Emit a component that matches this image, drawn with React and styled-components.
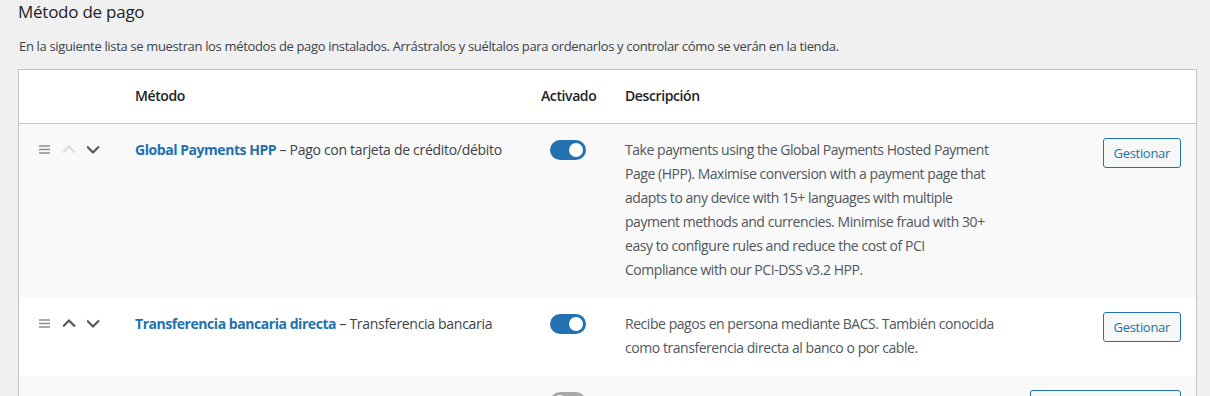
import styled, { createGlobalStyle } from 'styled-components'

const GlobalStyle = createGlobalStyle`
  html, body {
    margin: 0;
    background: #f0f0f1;
    font-family: "Open Sans", "Noto Sans", sans-serif;
    color: #3c434a;
  }
`

const Page = styled.div`
  padding: 0 13px 0 18px;
`
const Title = styled.h2`
  margin: 0;
  font-size: 17px;
  line-height: 24px;
  font-weight: 400;
  letter-spacing: -0.25px;
  color: #1d2327;
`
const Intro = styled.p`
  margin: 12px 0 13px 1px;
  font-size: 13px;
  line-height: 20px;
  letter-spacing: -0.34px;
  color: #3c434a;
`
const Table = styled.div`
  background: #fff;
  border: 1px solid #c3c4c7;
  display: grid;
  grid-template-columns: 101px 406px 84px 402px 1fr;
`
const Row = styled.div`
  display: contents;
  & > div {
    background: ${p => (p.$striped ? '#f9f9f9' : '#fff')};
    border-bottom: ${p => (p.$head ? '1px solid #c3c4c7' : 'none')};
  }
`
const Cell = styled.div`
  padding: ${p => (p.$low ? '18px' : '14px')} 15px 16px;
  font-size: 14px;
  line-height: 24px;
  letter-spacing: -0.45px;
  text-align: ${p => p.$align || 'left'};
`
const HeadCell = styled(Cell)`
  padding: 14px 15px 15px;
  font-weight: 600;
  letter-spacing: -0.4px;
  color: #1d2327;
`
const SortCell = styled(Cell)`
  padding: 13px 0 15px 20px;
`
const SortIcons = styled.div`
  display: flex;
  align-items: center;
  height: 24px;
`
const ControlCell = styled(Cell)`
  padding: 15px;
`
const ActionCell = styled(Cell)`
  padding: 15px 15px 15px 0;
`
const MethodName = styled.a`
  color: #2271b1;
  font-weight: 700;
  text-decoration: none;
`
const MethodTitle = styled.span`
  color: #3c434a;
  letter-spacing: -0.3px;
`
const Description = styled.div`
  color: #50575e;
`
const Toggle = styled.span`
  display: inline-block;
  position: relative;
  width: 36px;
  height: 20px;
  margin-top: 1px;
  border-radius: 10px;
  background: ${p => (p.$on ? '#2271b1' : '#a7aaad')};
  vertical-align: top;
  &::after {
    content: '';
    position: absolute;
    top: 3px;
    left: ${p => (p.$on ? '19px' : '3px')};
    width: 14px;
    height: 14px;
    border-radius: 50%;
    background: #fff;
  }
`
const Button = styled.button`
  font-family: inherit;
  font-size: 13px;
  line-height: 26px;
  height: 30px;
  padding: 0 10px;
  margin-top: -1px;
  letter-spacing: -0.3px;
  color: #2271b1;
  background: #f6f7f7;
  border: 1px solid #2271b1;
  border-radius: 3px;
  cursor: pointer;
  white-space: nowrap;
`

function MenuIcon() {
  return (
    <svg width="24" height="24" viewBox="0 0 24 24" fill="none" stroke="#8c8f94" strokeWidth="1.3">
      <path d="M0 9h11M0 12.5h11M0 16h11" />
    </svg>
  )
}

function Chevron({ up, disabled }) {
  return (
    <svg width="24" height="24" viewBox="0 0 24 24" fill="none"
      stroke={disabled ? '#dcdcde' : '#50575e'} strokeWidth="2.2" strokeLinejoin="miter">
      <path d={up ? 'M0 15.5l6-6 6 6' : 'M0 9.5l6 6 6-6'} />
    </svg>
  )
}

const methods = [
  {
    name: 'Global Payments HPP',
    title: 'Pago con tarjeta de crédito/débito',
    on: true,
    first: true,
    action: 'Gestionar',
    desc: 'Take payments using the Global Payments Hosted Payment Page (HPP). Maximise conversion with a payment page that adapts to any device with 15+ languages with multiple payment methods and currencies. Minimise fraud with 30+ easy to configure rules and reduce the cost of PCI Compliance with our PCI-DSS v3.2 HPP.',
  },
  {
    name: 'Transferencia bancaria directa',
    title: 'Transferencia bancaria',
    on: true,
    action: 'Gestionar',
    desc: 'Recibe pagos en persona mediante BACS. También conocida como transferencia directa al banco o por cable.',
  },
  {
    name: 'Pagos por cheque',
    title: 'Pagos por cheque',
    on: false,
    low: true,
    action: 'Finalizar configuración',
    desc: 'Recibe pagos en persona con cheque. Esta opción offline puede ser útil para probar compras.',
  },
]

export default function App() {
  return (
    <Page>
      <GlobalStyle />
      <Title>Método de pago</Title>
      <Intro>
        En la siguiente lista se muestran los métodos de pago instalados. Arrástralos y suéltalos para ordenarlos y controlar cómo se verán en la tienda.
      </Intro>
      <Table>
        <Row $head>
          <HeadCell />
          <HeadCell>Método</HeadCell>
          <HeadCell $align="center">Activado</HeadCell>
          <HeadCell>Descripción</HeadCell>
          <HeadCell />
        </Row>
        {methods.map((m, i) => (
          <Row key={m.name} $striped={i % 2 === 0}>
            <SortCell $low={m.low}>
              <SortIcons>
                <MenuIcon />
                <Chevron up disabled={m.first} />
                <Chevron />
              </SortIcons>
            </SortCell>
            <Cell $low={m.low}>
              <MethodName href="#">{m.name}</MethodName>
              <MethodTitle> – {m.title}</MethodTitle>
            </Cell>
            <ControlCell $align="center">
              <Toggle $on={m.on} />
            </ControlCell>
            <Cell $low={m.low}>
              <Description>{m.desc}</Description>
            </Cell>
            <ActionCell $align="right">
              <Button>{m.action}</Button>
            </ActionCell>
          </Row>
        ))}
      </Table>
    </Page>
  )
}
